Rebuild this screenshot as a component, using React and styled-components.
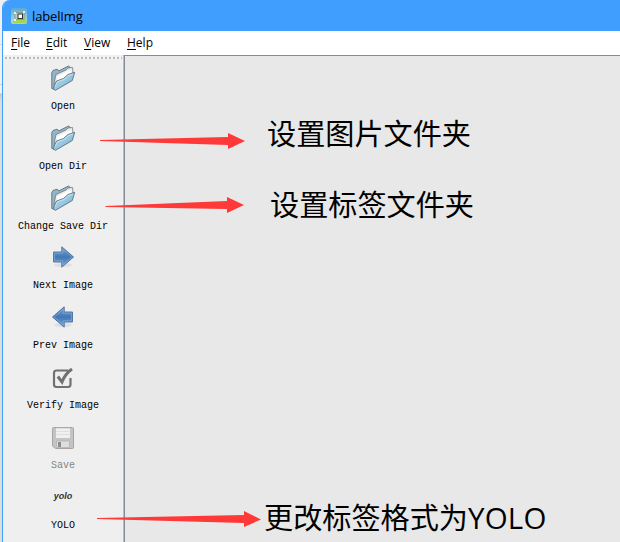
import React from "react";
import styled, { createGlobalStyle } from "styled-components";

const GlobalStyle = createGlobalStyle`
  * { box-sizing: border-box; }
  html, body { margin: 0; padding: 0; overflow: hidden; background: #e4e5e6; }
`;

const Desktop = styled.div`
  position: relative;
  width: 620px;
  height: 542px;
  padding-left: 2px;
  overflow: hidden;
  background: linear-gradient(#f0f0f0 0 44px, #d8d8d8 44px 45px, #f0f0f0 45px 84px, #cfcfcf 84px 85px, #f0f0f0 85px 93px, #c6c8ca 94px, #dcdddd 101px);
`;

const Window = styled.div`
  display: flex;
  flex-direction: column;
  height: 542px;
  border-left: 1px solid #409eff;
  border-top-left-radius: 8px;
  overflow: hidden;
  background: #fff;
`;

const TitleBar = styled.header`
  display: flex;
  align-items: center;
  flex: 0 0 31px;
  gap: 5px;
  padding-left: 8px;
  background: #409eff;
  color: #000;
  font: 13px/16px "Open Sans", "Noto Sans", sans-serif;
  letter-spacing: -0.15px;
`;

const MenuBar = styled.nav`
  display: flex;
  flex: 0 0 23px;
  padding-left: 8px;
  font: 12px/24px "Open Sans", "Noto Sans", sans-serif;
  color: #000;
`;

const MenuItem = styled.span`
  width: ${(p) => p.$width}px;
  white-space: nowrap;
`;

const Mnemonic = styled.span`
  text-decoration: underline;
  text-underline-offset: 2px;
  text-decoration-thickness: 1px;
`;

const Body = styled.main`
  display: flex;
  flex: 1;
  min-height: 0;
`;

const ToolBar = styled.aside`
  flex: 0 0 120px;
  background: #efefef;
`;

const Handle = styled.div`
  height: 5px;
  background: repeating-linear-gradient(90deg, #b9b9b9 0 2px, #f8f8f8 2px 4px) 2px 2px / 117px 2px no-repeat;
`;

const Tool = styled.div`
  display: flex;
  flex-direction: column;
  align-items: center;
  height: ${(p) => p.$height}px;
  padding-top: 5px;
  gap: 9px;
  color: ${(p) => (p.$disabled ? "#858585" : "#000")};
`;

const ToolIcon = styled.span`
  display: flex;
  align-items: center;
  justify-content: center;
  flex: 0 0 24px;
  width: 26px;
`;

const ToolLabel = styled.span`
  font: 10px/14px "Liberation Mono", monospace;
  white-space: nowrap;
`;

const YoloMark = styled.span`
  font: italic bold 9px/12px "Liberation Sans", sans-serif;
  color: #333;
  padding-bottom: 5px;
`;

const Canvas = styled.section`
  flex: 1;
  border-top: 1px solid #858b96;
  border-left: 1px solid #858b96;
  box-shadow: -1px 0 #b9bcc1;
  margin-left: 1px;
  background: #e8e8e8;
`;

const Arrows = styled.svg`
  position: absolute;
  left: 0;
  top: 0;
  pointer-events: none;
`;

const Note = styled.span`
  position: absolute;
  left: ${(p) => p.$x}px;
  top: ${(p) => p.$y}px;
  font: 29.150px/40px "Noto Sans CJK SC", sans-serif;
  color: #000;
  white-space: nowrap;
`;

const Latin = styled.span`
  font-family: "Open Sans", "Noto Sans", sans-serif;
  font-size: 29.5px;
  letter-spacing: 0.2px;
`;

const AppIcon = () => (
  <svg width="16" height="16" viewBox="0 0 16 16">
    <defs>
      <linearGradient id="sky" x2="0" y2="1">
        <stop stopColor="#5da9d0" />
        <stop offset="1" stopColor="#b8e2ed" />
      </linearGradient>
    </defs>
    <rect width="16" height="16" rx="2.5" fill="url(#sky)" />
    <path d="M1 15L4 10L7 12L11 5L15.500 12V14Q15.500 15.500 14 15.500H2Z" fill="#a4d653" />
    <path d="M4 4.500H13V11.500H4Z" fill="#b9cdc6" stroke="#7d8d86" strokeWidth=".7" />
    <rect x="7" y="6" width="4.500" height="4.500" fill="#fff" stroke="#333" />
    <path d="M3 4h2v2H3zM12 3h2v2h-2zM3 11h2v2H3z" fill="#e1f1ef" />
  </svg>
);

const FolderIcon = () => (
  <svg width="26" height="26" viewBox="0 0 26 26">
    <defs>
      <linearGradient id="folder" x2="1" y2="1">
        <stop stopColor="#b9dae8" />
        <stop offset=".55" stopColor="#95c6df" />
        <stop offset="1" stopColor="#5b9fc5" />
      </linearGradient>
    </defs>
    <path d="M1.800 7.500L3 5.500L7 4.200L9 5.800L18.500 1L20.500 2.500L19.500 12L5 24L1.800 23.500Z" fill="#8fb6c9" stroke="#6c7c84" strokeWidth="1" />
    <path d="M5 14L6 9.500L16 5L18 3L22.500 2.500L23 8L11 18L4 21Z" fill="#ededed" stroke="#74797c" strokeWidth=".8" />
    <path d="M6.500 12L17 6.500L21.500 5.500L21 9.500L7.500 16Z" fill="#fff" />
    <path d="M3 24L6.500 16L13.500 13.500L18 9.500L24.700 7.300L22.300 15.500L5.500 25.300Z" fill="url(#folder)" stroke="#5b7481" strokeWidth=".9" />
    <path d="M5 21.500L7.500 16.800L14 14.500L18.500 10.500L23 9" fill="none" stroke="#d5ebf4" strokeWidth=".8" />
  </svg>
);

const ArrowIcon = ({ left }) => (
  <svg width="26" height="26" viewBox="0 0 26 26">
    <defs>
      <linearGradient id="blueArrow" x2="0" y2="1">
        <stop stopColor="#7ba4d2" />
        <stop offset=".5" stopColor="#4277b6" />
        <stop offset="1" stopColor="#78a3d5" />
      </linearGradient>
    </defs>
    <ellipse cx="13" cy="21" rx="9" ry="2" fill="#dfdfdf" />
    <g transform={left ? "translate(26 0) scale(-1 1)" : undefined}>
      <path d="M3.500 8H11.800V2.800L23.500 13L11.800 23.200V18H3.500Z" fill="url(#blueArrow)" stroke="#5577a3" />
      <path d="M4.600 9.200H12.800V5.200L21.800 13L12.800 20.800V16.800H4.600Z" fill="none" stroke="#8fb1d8" strokeWidth=".6" />
    </g>
  </svg>
);

const VerifyIcon = () => (
  <svg width="24" height="24" viewBox="0 0 24 24" fill="none" stroke="#717171">
    <path d="M17.500 4.500H5.500Q3 4.500 3 7V18.500Q3 21 5.500 21H17Q19.500 21 19.500 18.500V12" strokeWidth="2.2" />
    <path d="M6.800 10.500L11 16Q14 8 21 3" strokeWidth="3" />
  </svg>
);

const SaveIcon = () => (
  <svg width="24" height="24" viewBox="0 0 24 24">
    <path d="M2.500 1.500H21.500Q22.500 1.500 22.500 2.500V21.500Q22.500 22.500 21.500 22.500H4.500L1.500 20V2.500Q1.500 1.500 2.500 1.500Z" fill="#c4c4c4" stroke="#a5a5a5" />
    <path d="M4.500 2h15v10.500h-15z" fill="#f0f0f0" stroke="#b5b5b5" strokeWidth=".6" />
    <path d="M5.500 5.500h13M5.500 8.500h13" stroke="#dedede" />
    <path d="M5.500 15h13v6.500h-13z" fill="#dedede" stroke="#b0b0b0" strokeWidth=".7" />
    <path d="M7 16h3v5H7z" fill="#8c8c8c" />
  </svg>
);

const tools = [
  { label: "Open", icon: <FolderIcon />, height: 60 },
  { label: "Open Dir", icon: <FolderIcon />, height: 60 },
  { label: "Change Save Dir", icon: <FolderIcon />, height: 59 },
  { label: "Next Image", icon: <ArrowIcon />, height: 60 },
  { label: "Prev Image", icon: <ArrowIcon left />, height: 62 },
  { label: "Verify Image", icon: <VerifyIcon />, height: 60 },
  { label: "Save", icon: <SaveIcon />, height: 60, disabled: true },
  { label: "YOLO", icon: <YoloMark>yolo</YoloMark>, height: 60 },
];

const menus = [
  { label: "File", width: 35 },
  { label: "Edit", width: 38 },
  { label: "View", width: 43 },
  { label: "Help", width: 40 },
];

export default function App() {
  return (
    <>
      <GlobalStyle />
      <Desktop>
        <Window>
          <TitleBar>
            <AppIcon />
            <span>labelImg</span>
          </TitleBar>
          <MenuBar>
            {menus.map(({ label, width }) => (
              <MenuItem key={label} $width={width}>
                <Mnemonic>{label[0]}</Mnemonic>
                {label.slice(1)}
              </MenuItem>
            ))}
          </MenuBar>
          <Body>
            <ToolBar>
              <Handle />
              {tools.map((tool) => (
                <Tool key={tool.label} $height={tool.height} $disabled={tool.disabled}>
                  <ToolIcon>{tool.icon}</ToolIcon>
                  <ToolLabel>{tool.label}</ToolLabel>
                </Tool>
              ))}
            </ToolBar>
            <Canvas />
          </Body>
        </Window>
        <Arrows width="620" height="542" fill="#ff3838">
          <path d="M100 140L228 137V133L245 141L228 149V145L100 141Z" />
          <path d="M105.500 206L227 201V197L244 205L227 213V209L105.500 207Z" />
          <path d="M97 518L244 515V511L261 519.500L244 527V523L97 519Z" />
        </Arrows>
        <Note $x={267} $y={112}>设置图片文件夹</Note>
        <Note $x={270} $y={183}>设置标签文件夹</Note>
        <Note $x={264} $y={496}>
          更改标签格式为<Latin>YOLO</Latin>
        </Note>
      </Desktop>
    </>
  );
}
